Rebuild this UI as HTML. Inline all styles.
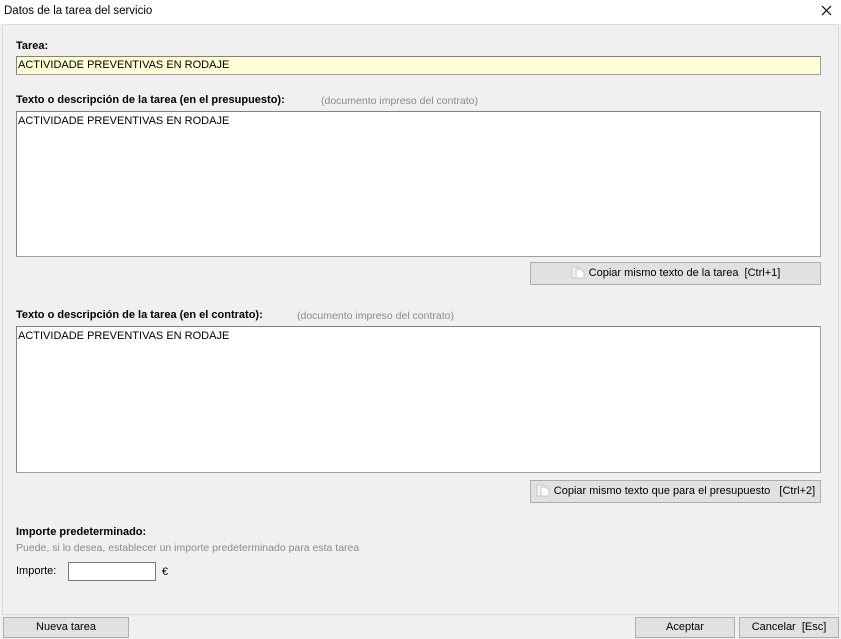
<!DOCTYPE html>
<html><head><style>
*{margin:0;padding:0;box-sizing:border-box}
body{width:841px;height:639px;background:#f0f0f0;font-family:"Liberation Sans",sans-serif;font-size:11px;color:#000;position:relative;overflow:hidden}
.a{position:absolute;white-space:nowrap}
.title{left:0;top:0;width:841px;height:24px;background:#fff}
.b{font-weight:bold;font-size:11px}
.g{color:#8a8a8a;font-size:10.5px}
.box{position:absolute;background:#fff;border:1px solid #a0a0a0;border-top-color:#828282;border-left-color:#828282}
.btn{position:absolute;background:#e1e1e1;border:1px solid #adadad;text-align:center;line-height:20px;font-size:11px}
.btn svg{vertical-align:-3px;margin-right:4px}
</style></head><body>
<div class="a title"></div>
<div class="a" style="left:4px;top:5px;font-size:11.5px">Datos de la tarea del servicio</div>
<svg class="a" style="left:821px;top:5px" width="11" height="11"><path d="M1 1L10 10M10 1L1 10" stroke="#000" stroke-width="1.2"/></svg>
<div class="a" style="left:2px;top:24px;width:837px;height:591px;border:1px solid #dcdcdc"></div>
<div class="a b" style="left:16px;top:40px">Tarea:</div>
<div class="box" style="left:16px;top:56px;width:805px;height:19px;background:#ffffd5"><span class="a" style="left:1px;top:2px">ACTIVIDADE PREVENTIVAS EN RODAJE</span></div>
<div class="a b" style="left:16px;top:94px">Texto o descripción de la tarea (en el presupuesto):</div>
<div class="a g" style="left:321px;top:95px">(documento impreso del contrato)</div>
<div class="box" style="left:16px;top:111px;width:805px;height:146px"><span class="a" style="left:1px;top:3px">ACTIVIDADE PREVENTIVAS EN RODAJE</span></div>
<div class="btn" style="left:530px;top:262px;width:291px;height:23px"><svg width="14" height="13"><path d="M1 1h6l2 2v9H1z" fill="#f4f4f4" stroke="#c8c8c8"/><path d="M5 3h5l3 3v6H5z" fill="#fff" stroke="#c8c8c8"/></svg>Copiar mismo texto de la tarea&nbsp; [Ctrl+1]</div>
<div class="a b" style="left:16px;top:309px">Texto o descripción de la tarea (en el contrato):</div>
<div class="a g" style="left:297px;top:310px">(documento impreso del contrato)</div>
<div class="box" style="left:16px;top:326px;width:805px;height:147px"><span class="a" style="left:1px;top:3px">ACTIVIDADE PREVENTIVAS EN RODAJE</span></div>
<div class="btn" style="left:530px;top:480px;width:291px;height:23px"><svg width="14" height="13"><path d="M1 1h6l2 2v9H1z" fill="#f4f4f4" stroke="#c8c8c8"/><path d="M5 3h5l3 3v6H5z" fill="#fff" stroke="#c8c8c8"/></svg>Copiar mismo texto que para el presupuesto&nbsp;&nbsp; [Ctrl+2]</div>
<div class="a b" style="left:16px;top:526px">Importe predeterminado:</div>
<div class="a g" style="left:16px;top:542px">Puede, si lo desea, establecer un importe predeterminado para esta tarea</div>
<div class="a" style="left:16px;top:565px">Importe:</div>
<div class="box" style="left:68px;top:562px;width:88px;height:19px;border-color:#7a7a7a"></div>
<div class="a" style="left:162px;top:566px">€</div>
<div class="btn" style="left:3px;top:617px;width:126px;height:21px;line-height:19px">Nueva tarea</div>
<div class="btn" style="left:635px;top:617px;width:100px;height:21px;line-height:19px">Aceptar</div>
<div class="btn" style="left:739px;top:617px;width:100px;height:21px;line-height:19px">Cancelar&nbsp; [Esc]</div>
</body></html>
